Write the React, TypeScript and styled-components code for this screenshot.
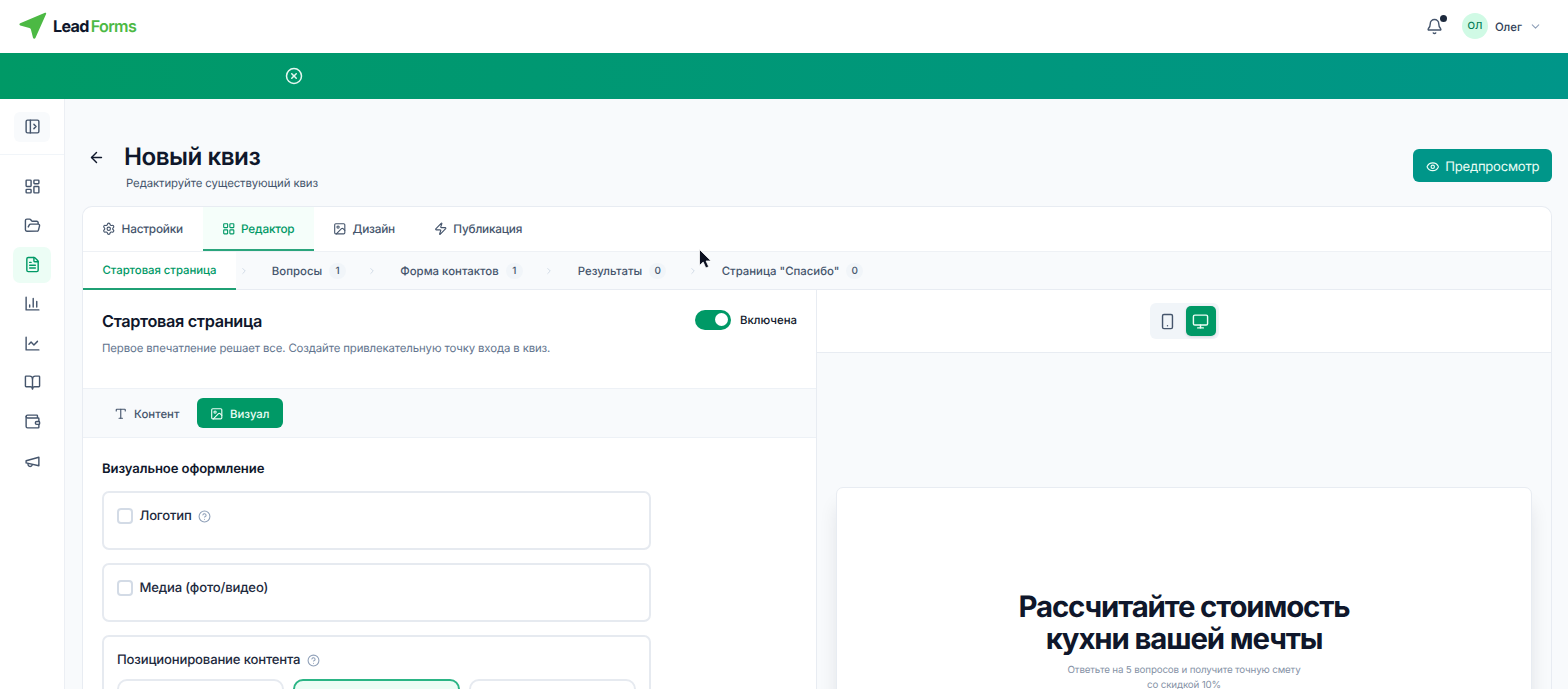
import type { ReactNode } from 'react';
import styled, { createGlobalStyle, css } from 'styled-components';
import {
    ArrowLeft,
    Bell,
    BookOpen,
    ChevronDown,
    ChevronRight,
    CircleQuestionMark,
    CircleX,
    Eye,
    FileText,
    FolderOpen,
    Image,
    LayoutDashboard,
    LayoutGrid,
    Monitor,
    PanelLeftOpen,
    Settings,
    Smartphone,
    Type,
    Zap,
} from 'lucide-react';

interface StrokeIconProps {
    children: ReactNode;
}
const StrokeIcon = ({ children }: StrokeIconProps) => (
    <svg
        width="17"
        height="17"
        viewBox="0 0 24 24"
        fill="none"
        stroke="currentColor"
        strokeWidth="2"
        strokeLinecap="round"
        strokeLinejoin="round"
    >
        {children}
    </svg>
);

const menu = [
    { id: 'dashboard', icon: <LayoutDashboard size={17} /> },
    { id: 'folders', icon: <FolderOpen size={17} /> },
    { id: 'forms', icon: <FileText size={17} />, active: true },
    {
        id: 'stats',
        icon: (
            <StrokeIcon>
                <path d="M3 3v18h18M18 17V9M13 17V5M8 17v-3" />
            </StrokeIcon>
        ),
    },
    {
        id: 'growth',
        icon: (
            <StrokeIcon>
                <path d="M3 3v18h18M19 9l-5 5-4-4-3 3" />
            </StrokeIcon>
        ),
    },
    { id: 'docs', icon: <BookOpen size={17} /> },
    {
        id: 'wallet',
        icon: (
            <StrokeIcon>
                <path d="M19 7V4a1 1 0 0 0-1-1H5a2 2 0 0 0 0 4h15a1 1 0 0 1 1 1v4h-3a2 2 0 0 0 0 4h3a1 1 0 0 0 1-1v-2a1 1 0 0 0-1-1" />
                <path d="M3 5v14a2 2 0 0 0 2 2h15a1 1 0 0 0 1-1v-4" />
            </StrokeIcon>
        ),
    },
    {
        id: 'promo',
        icon: (
            <StrokeIcon>
                <path d="m3 11 18-5v12L3 14v-3z" />
                <path d="M11.6 16.8a3 3 0 1 1-5.8-1.6" />
            </StrokeIcon>
        ),
    },
];

const tabs = [
    { text: 'Настройки', icon: <Settings size={13.5} />, width: 120 },
    { text: 'Редактор', icon: <LayoutGrid size={13.5} />, width: 111, active: true },
    { text: 'Дизайн', icon: <Image size={13.5} />, width: 101 },
    { text: 'Публикация', icon: <Zap size={13.5} />, width: 127 },
];

const steps = [
    { text: 'Вопросы', count: 1, width: 115 },
    { text: 'Форма контактов', count: 1, width: 164 },
    { text: 'Результаты', count: 0, width: 131 },
    { text: 'Страница "Спасибо"', count: 0, width: 184 },
];

const App = () => {
    return (
        <Page>
            <GlobalStyle />
            <Header>
                <Logo>
                    <svg width="28" height="28" viewBox="0 0 28 28">
                        <path
                            d="M1.200 11.200 26 .8c.8-.3 1.400.3 1.100 1.100L16.400 26c-.5 1.100-2 1-2.400-.2l-2.100-8.300c-.2-.8-.7-1.300-1.500-1.500l-9.100-2.600c-1.100-.4-1.200-1.800-.1-2.200z"
                            fill="#4cb944"
                        />
                    </svg>
                    <LogoText>
                        Lead<span>Forms</span>
                    </LogoText>
                </Logo>
                <UserArea>
                    <Notice>
                        <Bell size={17} />
                        <NoticeDot />
                    </Notice>
                    <Avatar>ОЛ</Avatar>
                    <UserName>Олег</UserName>
                    <ChevronDown size={13} color="#90a1b9" />
                </UserArea>
            </Header>
            <Banner>
                <CircleX size={18} />
            </Banner>
            <Body>
                <Sidebar>
                    <SidebarTop>
                        <ToggleButton>
                            <PanelLeftOpen size={17} />
                        </ToggleButton>
                    </SidebarTop>
                    <Menu>
                        {menu.map((item) => (
                            <MenuItem key={item.id} $active={item.active}>
                                {item.icon}
                            </MenuItem>
                        ))}
                    </Menu>
                </Sidebar>
                <Main>
                    <PageHead>
                        <BackButton>
                            <ArrowLeft size={17} />
                        </BackButton>
                        <HeadText>
                            <h1>Новый квиз</h1>
                            <p>Редактируйте существующий квиз</p>
                        </HeadText>
                        <PreviewButton>
                            <Eye size={13.5} />
                            Предпросмотр
                        </PreviewButton>
                    </PageHead>
                    <Card>
                        <Tabs>
                            {tabs.map((tab) => (
                                <Tab key={tab.text} $active={tab.active} $width={tab.width}>
                                    {tab.icon}
                                    {tab.text}
                                </Tab>
                            ))}
                        </Tabs>
                        <Steps>
                            <StartStep>Стартовая страница</StartStep>
                            {steps.map((step) => (
                                <StepGroup key={step.text}>
                                    <ChevronRight size={10} color="#cad5e2" />
                                    <Step $width={step.width}>
                                        {step.text}
                                        <Count>{step.count}</Count>
                                    </Step>
                                </StepGroup>
                            ))}
                        </Steps>
                        <Columns>
                            <Editor>
                                <EditorHead>
                                    <div>
                                        <h2>Стартовая страница</h2>
                                        <p>
                                            Первое впечатление решает все. Создайте
                                            привлекательную точку входа в квиз.
                                        </p>
                                    </div>
                                    <SwitchLabel>
                                        <Switch>
                                            <i />
                                        </Switch>
                                        Включена
                                    </SwitchLabel>
                                </EditorHead>
                                <ModeBar>
                                    <ModeButton $width={90}>
                                        <Type size={13.5} />
                                        Контент
                                    </ModeButton>
                                    <ModeButton $width={86} $active>
                                        <Image size={13.5} />
                                        Визуал
                                    </ModeButton>
                                </ModeBar>
                                <Options>
                                    <h3>Визуальное оформление</h3>
                                    <Option>
                                        <OptionLabel>
                                            <CheckBox />
                                            <span>Логотип</span>
                                            <CircleQuestionMark size={13} />
                                        </OptionLabel>
                                    </Option>
                                    <Option>
                                        <OptionLabel>
                                            <CheckBox />
                                            <span>Медиа (фото/видео)</span>
                                        </OptionLabel>
                                    </Option>
                                    <Option $tall>
                                        <OptionLabel>
                                            <span>Позиционирование контента</span>
                                            <CircleQuestionMark size={13} />
                                        </OptionLabel>
                                        <Positions>
                                            <Position />
                                            <Position $active />
                                            <Position />
                                        </Positions>
                                    </Option>
                                </Options>
                            </Editor>
                            <Preview>
                                <DeviceBar>
                                    <Devices>
                                        <Device>
                                            <Smartphone size={17} />
                                        </Device>
                                        <Device $active>
                                            <Monitor size={17} />
                                        </Device>
                                    </Devices>
                                </DeviceBar>
                                <Canvas>
                                    <QuizCard>
                                        <h2>
                                            Рассчитайте стоимость
                                            <br />
                                            кухни вашей мечты
                                        </h2>
                                        <p>
                                            Ответьте на 5 вопросов и получите точную смету
                                            <br />
                                            со скидкой 10%
                                        </p>
                                    </QuizCard>
                                </Canvas>
                            </Preview>
                        </Columns>
                    </Card>
                </Main>
            </Body>
            <Cursor viewBox="0 0 14 22">
                <path
                    d="M1.500 1.500v16l3.700-3.400 2.600 5.900 2.900-1.300-2.600-5.700h5z"
                    fill="#0b1020"
                    stroke="#fff"
                    strokeWidth="0.8"
                />
            </Cursor>
        </Page>
    );
};
export default App;

const GlobalStyle = createGlobalStyle`
    * {
        box-sizing: border-box;
    }
    body {
        margin: 0;
        overflow: hidden;
        font-family: Inter, 'Liberation Sans', sans-serif;
        text-rendering: geometricPrecision;
        color: #0f172b;
    }
    h1, h2, h3, p {
        margin: 0;
    }
    button {
        font-family: inherit;
        text-rendering: inherit;
        border: none;
        padding: 0;
        background: none;
    }
    svg {
        flex-shrink: 0;
    }
`;
const Page = styled.div`
    height: 689px;
    display: flex;
    flex-direction: column;
    overflow: hidden;
    background: #f8fafc;
`;
const Header = styled.header`
    height: 53px;
    flex-shrink: 0;
    display: flex;
    align-items: center;
    justify-content: space-between;
    padding: 0 26px 1px 19px;
    background: #fff;
`;
const Logo = styled.div`
    display: flex;
    align-items: center;
    gap: 6px;
`;
const LogoText = styled.div`
    font-size: 16.1px;
    font-weight: 700;
    letter-spacing: -0.65px;
    color: #0f172b;

    span {
        margin-left: 2px;
        font-weight: 600;
        color: #4cb944;
    }
`;
const UserArea = styled.div`
    display: flex;
    align-items: center;
    color: #314158;
`;
const Notice = styled.div`
    position: relative;
    display: flex;
    margin-right: 19px;
    color: #45556c;
`;
const NoticeDot = styled.i`
    position: absolute;
    top: -3px;
    right: -4px;
    width: 7px;
    height: 7px;
    border-radius: 50%;
    background: #1d293d;
`;
const Avatar = styled.div`
    width: 26px;
    height: 26px;
    display: flex;
    align-items: center;
    justify-content: center;
    border-radius: 50%;
    background: #d0fae5;
    color: #007a55;
    font-size: 9.8px;
    font-weight: 500;
`;
const UserName = styled.span`
    margin: 0 7px 0 7px;
    padding-top: 1px;
    font-size: 11.4px;
    font-weight: 500;
`;
const Banner = styled.div`
    height: 46px;
    flex-shrink: 0;
    display: flex;
    align-items: center;
    padding: 0 0 1px 285px;
    background: linear-gradient(90deg, #009966, #009689);
    color: #e6f7f1;
`;
const Body = styled.div`
    flex: 1;
    min-height: 0;
    display: flex;
`;
const Sidebar = styled.aside`
    width: 65px;
    flex-shrink: 0;
    border-right: 1px solid #eceff4;
    background: #fff;
`;
const SidebarTop = styled.div`
    height: 56px;
    display: flex;
    align-items: center;
    justify-content: center;
    border-bottom: 1px solid #f1f5f9;
`;
const ToggleButton = styled.button`
    width: 36px;
    height: 30px;
    display: flex;
    align-items: center;
    justify-content: center;
    border-radius: 6px;
    background: #f8fafc;
    color: #45556c;
`;
const Menu = styled.nav`
    display: flex;
    flex-direction: column;
    align-items: center;
    gap: 3.3px;
    padding-top: 13px;
`;
const MenuItem = styled.button<{ $active?: boolean }>`
    width: 38px;
    height: 36px;
    display: flex;
    align-items: center;
    justify-content: center;
    border-radius: 7px;
    background: ${({ $active }) => ($active ? '#ecfdf5' : 'transparent')};
    color: ${({ $active }) => ($active ? '#009966' : '#45556c')};
`;
const Main = styled.main`
    flex: 1;
    min-width: 0;
    display: flex;
    flex-direction: column;
    padding: 0 16px 0 17px;
`;
const PageHead = styled.div`
    height: 107px;
    flex-shrink: 0;
    display: flex;
    align-items: flex-start;
`;
const BackButton = styled.button`
    width: 28px;
    display: flex;
    justify-content: center;
    margin-top: 50px;
    color: #0f172b;
`;
const HeadText = styled.div`
    flex: 1;
    margin: 43px 0 0 14px;

    h1 {
        font-size: 24.2px;
        line-height: 30px;
        font-weight: 600;
        letter-spacing: -0.5px;
    }
    p {
        margin: 3px 0 0 2px;
        font-size: 11.4px;
        line-height: 16px;
        letter-spacing: -0.1px;
        color: #45556c;
    }
`;
const PreviewButton = styled.button`
    width: 139px;
    height: 33px;
    display: flex;
    align-items: center;
    justify-content: center;
    gap: 6px;
    margin-top: 50px;
    padding-top: 2px;
    border-radius: 6px;
    background: #009689;
    color: #ecfdf5;
    font-size: 13.1px;
    letter-spacing: -0.25px;
`;
const Card = styled.section`
    flex: 1;
    min-height: 0;
    display: flex;
    flex-direction: column;
    border: 1px solid #e8ecf2;
    border-bottom: none;
    border-radius: 10px 10px 0 0;
    overflow: hidden;
    background: #fff;
`;
const Tabs = styled.div`
    height: 45px;
    flex-shrink: 0;
    display: flex;
    border-bottom: 1px solid #eef1f5;
`;
const Tab = styled.button<{ $active?: boolean; $width: number }>`
    width: ${({ $width }) => $width}px;
    display: flex;
    align-items: center;
    justify-content: center;
    gap: 6px;
    padding: 1px 1px 0 0;
    font-size: 11.8px;
    font-weight: 500;
    letter-spacing: -0.22px;
    color: #45556c;
    border-bottom: 2px solid transparent;
    ${({ $active }) =>
        $active &&
        css`
            color: #009966;
            background: #f5fefa;
            border-color: #2aa57c;
        `}
`;
const Steps = styled.div`
    height: 38px;
    flex-shrink: 0;
    display: flex;
    border-bottom: 1px solid #e8ecf2;
    background: #f8fafc;
`;
const StartStep = styled.div`
    width: 153px;
    height: 38px;
    display: flex;
    align-items: center;
    justify-content: center;
    border-bottom: 2px solid #1fa074;
    background: #fff;
    color: #009966;
    font-size: 11.4px;
    font-weight: 500;
    letter-spacing: -0.05px;
`;
const StepGroup = styled.div`
    display: flex;
    align-items: center;
    padding-left: 3px;
`;
const Step = styled.div<{ $width: number }>`
    width: ${({ $width }) => $width}px;
    display: flex;
    align-items: center;
    justify-content: center;
    gap: 7px;
    padding: 1px 0 0 5px;
    color: #45556c;
    font-size: 11.4px;
    font-weight: 500;
`;
const Count = styled.span`
    min-width: 17px;
    height: 16px;
    display: flex;
    align-items: center;
    justify-content: center;
    border-radius: 8px;
    background: #f1f5f9;
    font-size: 10px;
`;
const Columns = styled.div`
    flex: 1;
    min-height: 0;
    display: flex;
`;
const Editor = styled.div`
    width: 734px;
    flex-shrink: 0;
    border-right: 1px solid #e8ecf2;
`;
const EditorHead = styled.div`
    height: 98px;
    display: flex;
    justify-content: space-between;
    padding: 19px 19px 0;

    h2 {
        font-size: 16.3px;
        line-height: 24px;
        font-weight: 600;
        letter-spacing: -0.34px;
    }
    p {
        margin-top: 6px;
        font-size: 11.4px;
        line-height: 18px;
        letter-spacing: -0.13px;
        color: #62748e;
    }
`;
const SwitchLabel = styled.div`
    height: 21px;
    display: flex;
    align-items: center;
    gap: 9px;
    font-size: 11.4px;
    font-weight: 500;
`;
const Switch = styled.span`
    width: 36px;
    height: 20px;
    display: flex;
    align-items: center;
    justify-content: flex-end;
    padding: 3px;
    border-radius: 10px;
    background: #009966;

    i {
        width: 13px;
        height: 13px;
        border-radius: 50%;
        background: #fff;
    }
`;
const ModeBar = styled.div`
    height: 50px;
    display: flex;
    align-items: center;
    gap: 5px;
    padding-left: 19px;
    border-top: 1px solid #edf1f6;
    border-bottom: 1px solid #edf1f6;
    background: #f8fafc;
`;
const ModeButton = styled.button<{ $active?: boolean; $width: number }>`
    width: ${({ $width }) => $width}px;
    height: 30px;
    display: flex;
    align-items: center;
    justify-content: center;
    gap: 7px;
    padding: 1px 1px 0 0;
    border-radius: 6px;
    background: ${({ $active }) => ($active ? '#009966' : 'transparent')};
    color: ${({ $active }) => ($active ? '#ecfdf5' : '#45556c')};
    font-size: 11.4px;
    font-weight: 500;
`;
const Options = styled.div`
    display: flex;
    flex-direction: column;
    gap: 13px;
    padding: 20px 0 0 19px;

    h3 {
        margin-bottom: -2px;
        font-size: 13.1px;
        line-height: 22px;
        font-weight: 600;
        letter-spacing: -0.1px;
    }
`;
const Option = styled.div<{ $tall?: boolean }>`
    width: 549px;
    height: ${({ $tall }) => ($tall ? 140 : 59)}px;
    padding: 13px 13px 0;
    border: 2px solid #e6eaf0;
    border-radius: 7px;
`;
const OptionLabel = styled.div`
    height: 20px;
    display: flex;
    align-items: center;
    gap: 6.5px;
    font-size: 13.1px;
    font-weight: 500;
    letter-spacing: -0.17px;
    color: #1d293d;

    svg {
        color: #90a1b9;
    }
`;
const CheckBox = styled.span`
    width: 16px;
    height: 16px;
    border: 2px solid #d3dbe6;
    border-radius: 4px;
    background: #fff;
`;
const Positions = styled.div`
    display: grid;
    grid-template-columns: repeat(3, 1fr);
    gap: 9px;
    margin-top: 9px;
`;
const Position = styled.div<{ $active?: boolean }>`
    height: 80px;
    border: 2px solid ${({ $active }) => ($active ? '#2bb585' : '#e6eaf0')};
    border-radius: 10px;
    background: ${({ $active }) => ($active ? '#ecfdf5' : '#fff')};
`;
const Preview = styled.div`
    flex: 1;
    display: flex;
    flex-direction: column;
    background: #f8fafc;
`;
const DeviceBar = styled.div`
    height: 63px;
    flex-shrink: 0;
    display: flex;
    align-items: center;
    justify-content: center;
    border-bottom: 1px solid #e8ecf2;
    background: #fff;
`;
const Devices = styled.div`
    display: flex;
    gap: 3px;
    padding: 3px;
    border-radius: 6px;
    background: #f1f5f9;
`;
const Device = styled.button<{ $active?: boolean }>`
    width: 30px;
    height: 30px;
    display: flex;
    align-items: center;
    justify-content: center;
    border-radius: 5px;
    background: ${({ $active }) => ($active ? '#009966' : 'transparent')};
    color: ${({ $active }) => ($active ? '#ecfdf5' : '#45556c')};
    box-shadow: ${({ $active }) => ($active ? '0 1px 3px rgba(0, 0, 0, 0.12)' : 'none')};
`;
const Canvas = styled.div`
    flex: 1;
    padding: 134px 19px 0;
`;
const QuizCard = styled.div`
    height: 300px;
    padding-top: 104px;
    border: 1px solid #e8ecf2;
    border-radius: 7px;
    background: #fff;
    box-shadow: 0 16px 20px -3px rgba(15, 23, 43, 0.12);
    text-align: center;

    h2 {
        font-size: 29.4px;
        line-height: 32px;
        font-weight: 700;
        letter-spacing: -1.13px;
    }
    p {
        margin-top: 7px;
        font-size: 9.8px;
        line-height: 15px;
        letter-spacing: -0.17px;
        color: #8592a6;
    }
`;
const Cursor = styled.svg`
    position: absolute;
    left: 698px;
    top: 248px;
    width: 14px;
    height: 22px;
`;
